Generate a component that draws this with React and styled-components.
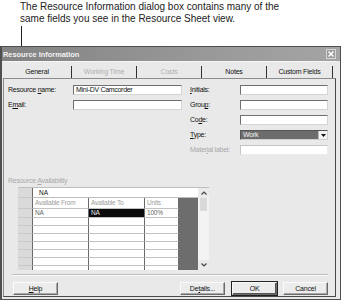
import React from 'react';
import styled, { createGlobalStyle } from 'styled-components';

const GlobalStyle = createGlobalStyle`
  html, body {
    margin: 0;
    padding: 0;
    background: #fff;
  }
  body {
    width: 341px;
    height: 304px;
    overflow: hidden;
    font-family: "Liberation Sans", Arial, sans-serif;
  }
  u {
    text-underline-offset: 1px;
  }
`;

const Page = styled.div`
  width: 341px;
  height: 304px;
  display: flex;
  flex-direction: column;
`;

const Caption = styled.p`
  margin: 0;
  padding: 1px 0 0 20px;
  font-size: 10px;
  line-height: 12px;
  color: #222;
`;

const Leader = styled.div`
  width: 1px;
  height: 20px;
  margin: 1px 0 0 21px;
  background: #222;
`;

const Dialog = styled.div`
  box-sizing: border-box;
  width: 341px;
  height: 254px;
  border: 1px solid #4f4f4f;
  border-left-width: 2px;
  background: #e9e9e9;
  display: flex;
  flex-direction: column;
`;

const TitleBar = styled.div`
  height: 14px;
  flex: none;
  display: flex;
  align-items: center;
  justify-content: space-between;
  padding: 0 4px 0 1px;
  background: linear-gradient(to right, #838383, #9c9c9c 70%, #a4a4a4);
`;

const Title = styled.span`
  font-size: 7.4px;
  font-weight: bold;
  color: #f2f2f2;
`;

const CloseButton = styled.div`
  box-sizing: border-box;
  width: 10px;
  height: 10px;
  border: 1px solid #d6d6d6;
  background: #9a9a9a;
  display: flex;
  align-items: center;
  justify-content: center;
`;

const Body = styled.div`
  flex: 1;
  display: flex;
  flex-direction: column;
  padding: 0 4px 2px 1px;
`;

const TabStrip = styled.div`
  height: 17px;
  flex: none;
  box-sizing: border-box;
  padding-top: 4px;
  display: grid;
  grid-template-columns: 69px 65px 65px 65px 66px;
  border-top: 1px solid #f6f6f6;
`;

const Tab = styled.div`
  border-right: 1px solid #333;
  font-size: 7px;
  letter-spacing: -0.2px;
  line-height: 12px;
  text-align: center;
  color: ${(p) => (p.$disabled ? '#b0b0b0' : '#111')};
`;

const Panel = styled.div`
  flex: 1;
  display: flex;
  flex-direction: column;
  border: 1px solid #8c8c8c;
  border-right-color: #4a4a4a;
  border-bottom-color: #4a4a4a;
  padding: 6px 0 0 4px;
`;

const FieldGrid = styled.div`
  display: grid;
  grid-template-columns: 65px 117px 50px 88px;
  grid-auto-rows: 10px;
  row-gap: 5px;
`;

const Label = styled.span`
  grid-column: ${(p) => p.$col};
  font-size: 7px;
  letter-spacing: -0.25px;
  line-height: 10px;
  white-space: nowrap;
  color: ${(p) => (p.$disabled ? '#a8a8a8' : '#111')};
`;

const Input = styled.div`
  grid-column: ${(p) => p.$col};
  box-sizing: border-box;
  width: ${(p) => p.$w}px;
  height: 10px;
  background: #fff;
  border: 1px solid;
  border-color: ${(p) =>
    p.$disabled ? '#c4c4c4 #ececec #ececec #c4c4c4' : '#6f6f6f #d4d4d4 #d4d4d4 #6f6f6f'};
  padding-left: 2px;
  font-size: 7px;
  letter-spacing: -0.3px;
  line-height: 8px;
  color: #111;
  white-space: nowrap;
`;

const Select = styled.div`
  grid-column: 4;
  box-sizing: border-box;
  width: 88px;
  height: 10px;
  display: flex;
  background: #6c6c6c;
  border: 1px solid #5a5a5a;
  border-color: #555 #cfcfcf #cfcfcf #555;
`;

const SelectValue = styled.span`
  flex: 1;
  padding-left: 2px;
  font-size: 7px;
  letter-spacing: -0.2px;
  line-height: 8px;
  color: #f4f4f4;
`;

const SelectArrow = styled.span`
  width: 8px;
  background: #f2f2f2;
  border-left: 1px solid #bbb;
  display: flex;
  align-items: center;
  justify-content: center;
`;

const SectionLabel = styled.div`
  margin: 21px 0 0 0;
  font-size: 7px;
  letter-spacing: -0.25px;
  line-height: 9px;
  color: #a9a9a9;
`;

const Table = styled.div`
  margin: 2px 0 0 10px;
  width: 191px;
  height: 83px;
  display: flex;
  overflow: hidden;
  border-top: 1px solid #bdbdbd;
  box-sizing: border-box;
`;

const TableBody = styled.div`
  width: 180px;
  display: flex;
  flex-direction: column;
  overflow: hidden;
`;

const Row = styled.div`
  flex: none;
  display: grid;
  grid-template-columns: 15px 56px 56px 34px 19px;
  height: ${(p) => p.$h}px;
`;

const Selector = styled.div`
  background: #dadada;
  border-bottom: 1px solid #c8c8c8;
  border-right: 1px solid #6a6a6a;
`;

const EntryBox = styled.div`
  grid-column: 2 / span 4;
  background: #fff;
  border-bottom: 1px solid #bdbdbd;
  padding-left: 6px;
  font-size: 6.5px;
  line-height: 9px;
  color: #111;
`;

const Cell = styled.div`
  box-sizing: border-box;
  background: ${(p) => (p.$selected ? '#0a0a0a' : '#fff')};
  border-right: 1px solid #6a6a6a;
  border-bottom: 1px solid #c2c2c2;
  padding-left: 2px;
  font-size: 6.5px;
  letter-spacing: -0.2px;
  line-height: ${(p) => p.$lh || 8}px;
  white-space: nowrap;
  overflow: hidden;
  color: ${(p) => (p.$selected ? '#eee' : p.$header ? '#9d9d9d' : '#666')};
`;

const DarkCell = styled.div`
  background: #6d6d6d;
`;

const Scrollbar = styled.div`
  width: 11px;
  display: flex;
  flex-direction: column;
  justify-content: space-between;
  background: #f3f3f3;
`;

const ScrollButton = styled.div`
  height: 10px;
  display: flex;
  align-items: center;
  justify-content: center;
  background: #ebebeb;
`;

const Thumb = styled.div`
  height: 13px;
  margin: 0 2px;
  background: #d9d9d9;
`;

const ScrollTop = styled.div`
  display: flex;
  flex-direction: column;
`;

const Divider = styled.div`
  margin: 4px 7px 0 4px;
  border-top: 1px solid #bdbdbd;
  border-bottom: 1px solid #fafafa;
`;

const ButtonRow = styled.div`
  margin: 6px 7px 0 5px;
  display: flex;
  gap: 6px;
`;

const Button = styled.div`
  box-sizing: border-box;
  width: 45px;
  height: 13px;
  margin-right: ${(p) => p.$gap || 0}px;
  background: #ececec;
  border: 1px solid;
  border-color: #fbfbfb #6a6a6a #6a6a6a #fbfbfb;
  outline: ${(p) => (p.$default ? '1px solid #222' : 'none')};
  outline-offset: 0;
  box-shadow: ${(p) => (p.$default ? 'inset -1px -1px 0 #555' : 'inset -1px -1px 0 #a8a8a8')};
  font-size: 7px;
  letter-spacing: -0.2px;
  line-height: 11px;
  text-align: center;
  color: #111;
`;

const Spacer = styled.div`
  flex: 1;
`;

const Chevron = ({ up }) => (
  <svg width="6" height="4" viewBox="0 0 6 4">
    <polyline
      points={up ? '0.5,3.5 3,1 5.5,3.5' : '0.5,0.5 3,3 5.5,0.5'}
      fill="none"
      stroke="#444"
      strokeWidth="1.2"
    />
  </svg>
);

const emptyRows = [0, 1, 2, 3, 4, 5, 6];

export default function App() {
  return (
    <Page>
      <GlobalStyle />
      <Caption>
        The Resource Information dialog box contains many of the
        <br />
        same fields you see in the Resource Sheet view.
      </Caption>
      <Leader />
      <Dialog>
        <TitleBar>
          <Title>Resource Information</Title>
          <CloseButton>
            <svg width="6" height="6" viewBox="0 0 6 6">
              <path d="M0.5 0.5 L5.5 5.5 M5.5 0.5 L0.5 5.5" stroke="#fff" strokeWidth="1.5" />
            </svg>
          </CloseButton>
        </TitleBar>
        <Body>
          <TabStrip>
            <Tab>General</Tab>
            <Tab $disabled>Working Time</Tab>
            <Tab $disabled>Costs</Tab>
            <Tab>Notes</Tab>
            <Tab>Custom Fields</Tab>
          </TabStrip>
          <Panel>
            <FieldGrid>
              <Label $col={1}>Resource <u>n</u>ame:</Label>
              <Input $col={2} $w={109}>Mini-DV Camcorder</Input>
              <Label $col={3}><u>I</u>nitials:</Label>
              <Input $col={4} $w={88} />

              <Label $col={1}>E<u>m</u>ail:</Label>
              <Input $col={2} $w={109} />
              <Label $col={3}>Grou<u>p</u>:</Label>
              <Input $col={4} $w={88} />

              <Label $col={3}>Co<u>d</u>e:</Label>
              <Input $col={4} $w={88} />

              <Label $col={3}><u>T</u>ype:</Label>
              <Select>
                <SelectValue>Work</SelectValue>
                <SelectArrow>
                  <svg width="5" height="3" viewBox="0 0 5 3">
                    <path d="M0 0 H5 L2.5 3 Z" fill="#111" />
                  </svg>
                </SelectArrow>
              </Select>

              <Label $col={3} $disabled>Mater<u>i</u>al label:</Label>
              <Input $col={4} $w={88} $disabled />
            </FieldGrid>

            <SectionLabel>Resource <u>A</u>vailability</SectionLabel>
            <Table>
              <TableBody>
                <Row $h={10}>
                  <Selector />
                  <EntryBox>NA</EntryBox>
                </Row>
                <Row $h={11}>
                  <Selector />
                  <Cell $header $lh={10}>Available From</Cell>
                  <Cell $header $lh={10}>Available To</Cell>
                  <Cell $header $lh={10}>Units</Cell>
                  <DarkCell />
                </Row>
                <Row $h={9}>
                  <Selector />
                  <Cell>NA</Cell>
                  <Cell $selected>NA</Cell>
                  <Cell>100%</Cell>
                  <DarkCell />
                </Row>
                {emptyRows.map((i) => (
                  <Row key={i} $h={8}>
                    <Selector />
                    <Cell />
                    <Cell />
                    <Cell />
                    <DarkCell />
                  </Row>
                ))}
              </TableBody>
              <Scrollbar>
                <ScrollTop>
                  <ScrollButton>
                    <Chevron up />
                  </ScrollButton>
                  <Thumb />
                </ScrollTop>
                <ScrollButton>
                  <Chevron />
                </ScrollButton>
              </Scrollbar>
            </Table>

            <Divider />
            <ButtonRow>
              <Button><u>H</u>elp</Button>
              <Spacer />
              <Button $gap={1}>De<u>t</u>ails...</Button>
              <Button $default>OK</Button>
              <Button>Cancel</Button>
            </ButtonRow>
          </Panel>
        </Body>
      </Dialog>
    </Page>
  );
}
